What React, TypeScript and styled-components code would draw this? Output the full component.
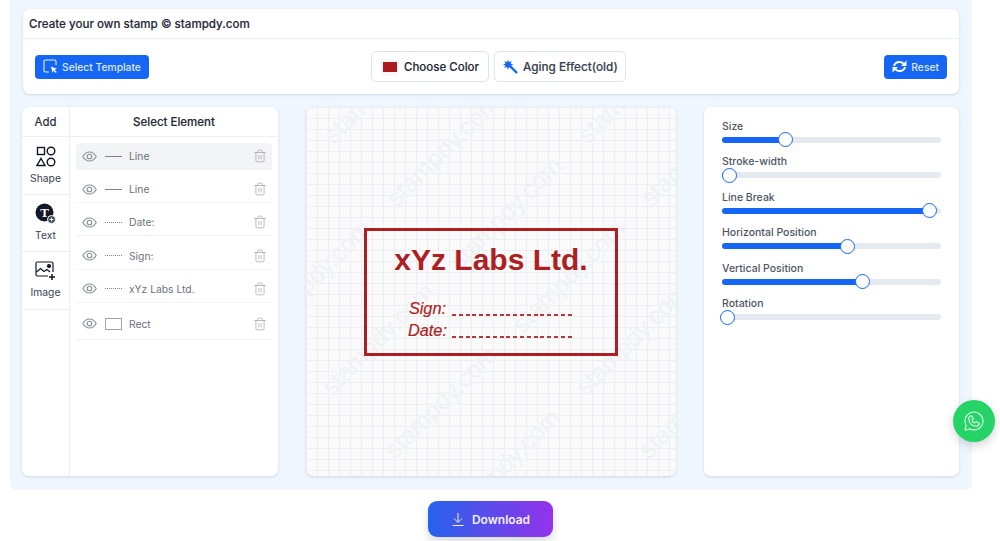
import React from "react";
import styled, { createGlobalStyle } from "styled-components";
import { Trash2 } from "lucide-react";
import { PiWhatsappLogoLight } from "react-icons/pi";

const Global = createGlobalStyle`
  html, body { margin: 0; padding: 0; background: #fff; }
  body { font-family: Inter, "Noto Sans", sans-serif; overflow: hidden; }
  * { box-sizing: border-box; }
`;

const Page = styled.div`
  width: 1000px;
  height: 541px;
  display: flex;
  flex-direction: column;
`;
const Panel = styled.main`
  width: 962px;
  height: 489px;
  margin-left: 10px;
  padding: 9px 13px 13px 12px;
  background: #eff6ff;
  border-radius: 0 0 7px 7px;
  display: flex;
  flex-direction: column;
  gap: 13px;
  box-shadow: 0 1px 1px rgba(30, 64, 120, 0.06);
`;
const HeaderCard = styled.section`
  height: 85px;
  margin-left: 1px;
  background: #fff;
  border-radius: 7px;
  box-shadow: 0 1px 3px rgba(15, 23, 42, 0.14);
  display: flex;
  flex-direction: column;
`;
const Title = styled.h1`
  margin: 0;
  height: 30px;
  padding-left: 6px;
  display: flex;
  align-items: center;
  font-size: 11.6px;
  font-weight: 500;
  color: #1f2937;
  -webkit-text-stroke: 0.15px #1f2937;
  border-bottom: 1px solid #eceef2;
`;
const Controls = styled.div`
  flex: 1;
  padding: 0 12px;
  display: grid;
  grid-template-columns: 336px 254px 1fr;
  align-items: center;
`;
const PrimaryButton = styled.button<{ $end?: boolean }>`
  height: 24px;
  padding: 0 8px;
  justify-self: ${(p) => (p.$end ? "end" : "start")};
  display: inline-flex;
  align-items: center;
  gap: 4px;
  border: 0;
  border-radius: 4px;
  background: #1566f5;
  color: #dfe9ff;
  font: 500 10.3px Inter, sans-serif;
`;
const CenterGroup = styled.div`
  display: flex;
  gap: 5px;
`;
const OutlineButton = styled.button<{ $muted?: boolean }>`
  height: 31px;
  padding: 0 ${(p) => (p.$muted ? 7 : 9)}px 0 8px;
  display: inline-flex;
  align-items: center;
  gap: 5px;
  background: #fff;
  border: 1px solid #dfe3ea;
  border-radius: 5px;
  color: ${(p) => (p.$muted ? "#374151" : "#1f2937")};
  font: 500 ${(p) => (p.$muted ? 11.75 : 11.5)}px Inter, sans-serif;
  -webkit-text-stroke: 0.15px ${(p) => (p.$muted ? "#374151" : "#1f2937")};
  white-space: nowrap;
`;
const Swatch = styled.span`
  width: 18px;
  height: 18px;
  margin-left: 1px;
  display: flex;
  align-items: center;
  justify-content: center;
  border-radius: 3px;
  background: #f8f8f8;
  &::after {
    content: "";
    width: 14px;
    height: 10px;
    background: #ad1a1e;
  }
`;
const Workspace = styled.div`
  flex: 1;
  display: grid;
  grid-template-columns: 256px 370px 255px;
  justify-content: space-between;
  min-height: 0;
`;
const Card = styled.section`
  background: #fff;
  border-radius: 7px;
  box-shadow: 0 1px 3px rgba(15, 23, 42, 0.14);
  overflow: hidden;
`;
const ElementsCard = styled(Card)`
  display: grid;
  grid-template-columns: 48px 1fr;
`;
const AddColumn = styled.div`
  border-right: 1px solid #eceef2;
  display: flex;
  flex-direction: column;
`;
const ColumnHead = styled.div`
  height: 30px;
  display: flex;
  align-items: center;
  justify-content: center;
  border-bottom: 1px solid #eceef2;
  font-size: 11.5px;
  font-weight: 400;
  color: #1f2937;
  -webkit-text-stroke: 0.15px #1f2937;
`;
const ElementsHead = styled(ColumnHead)`
  font-weight: 500;
`;
const AddTab = styled.button`
  height: 57.5px;
  padding: 0 0 1px;
  background: none;
  border: 0;
  border-bottom: 1px solid #eceef2;
  display: flex;
  flex-direction: column;
  align-items: center;
  justify-content: center;
  gap: 5px;
  color: #374151;
  font: 400 10.3px Inter, sans-serif;
`;
const ElementList = styled.ul`
  list-style: none;
  margin: 6px 0 0;
  padding: 0 6px;
`;
const ElementRow = styled.li<{ $active?: boolean; $tall?: boolean }>`
  height: ${(p) => (p.$tall ? 31 : 27)}px;
  margin-bottom: 6.2px;
  padding: 0 5px 0 6px;
  display: flex;
  align-items: center;
  border-bottom: 1px solid #f0f2f5;
  border-radius: ${(p) => (p.$active ? "5px 5px 0 0" : 0)};
  color: #6b7280;
  font-size: 10.3px;
  font-weight: 400;
  background: ${(p) => (p.$active ? "#f3f4f6" : "#fff")};
`;
const RowGlyph = styled.span`
  width: 24px;
  margin-left: 8px;
  display: flex;
  align-items: center;
`;
const RowLabel = styled.span`
  flex: 1;
`;
const SolidDash = styled.span`
  width: 17px;
  border-top: 1px solid #7b828c;
`;
const DotDash = styled.span`
  width: 17px;
  border-top: 1px dotted #7b828c;
`;
const RectGlyph = styled.span`
  width: 17px;
  height: 12px;
  border: 1px solid #9ca3af;
`;
const CanvasCard = styled(Card)`
  position: relative;
  background-color: #fafafb;
  background-image:
    linear-gradient(#eceef2 1px, transparent 1px),
    linear-gradient(90deg, #eceef2 1px, transparent 1px);
  background-size: 11px 11px;
  display: flex;
  align-items: center;
  justify-content: center;
`;
const Watermarks = styled.svg`
  position: absolute;
  inset: 0;
  width: 100%;
  height: 100%;
  font-family: "Liberation Sans", sans-serif;
  font-size: 25px;
  fill: #f0f1f4;
`;
const Stamp = styled.div`
  position: relative;
  width: 254px;
  height: 128px;
  border: 3px solid #ad1f23;
  color: #ad1f23;
  font-family: "Liberation Sans", Arial, sans-serif;
  display: flex;
  flex-direction: column;
  align-items: center;
`;
const StampName = styled.div`
  margin-top: 11px;
  font-size: 30px;
  line-height: 35px;
  font-weight: 700;
`;
const StampLines = styled.div`
  margin-top: 21px;
  align-self: flex-start;
  margin-left: 41px;
  display: grid;
  grid-template-columns: 38px 122px;
  column-gap: 6px;
  row-gap: 2px;
`;
const SignLabel = styled.span`
  font-size: 16.3px;
  line-height: 20px;
  font-style: italic;
  text-align: right;
  -webkit-text-stroke: 0.2px #ad1f23;
`;
const DashedLine = styled.span`
  height: 2px;
  margin-top: 16px;
  background: repeating-linear-gradient(90deg, #b5383c 0 4px, transparent 4px 6.8px);
`;
const SlidersCard = styled(Card)`
  padding: 12.5px 18px 0;
  display: flex;
  flex-direction: column;
  height: 369px;
`;
const SliderBlock = styled.div`
  height: 35.5px;
  display: flex;
  flex-direction: column;
  gap: 3px;
`;
const SliderLabel = styled.label`
  height: 14px;
  line-height: 14px;
  font-size: 10.5px;
  font-weight: 500;
  color: #4b5563;
`;
const Track = styled.div`
  position: relative;
  height: 6px;
  border-radius: 3px;
  background: #e5e9f0;
`;
const Fill = styled.div`
  height: 100%;
  border-radius: 3px;
  background: #1566f5;
`;
const Thumb = styled.span`
  position: absolute;
  top: -4.5px;
  width: 15px;
  height: 15px;
  margin-left: -7.5px;
  border-radius: 50%;
  background: #fff;
  border: 1.5px solid #1566f5;
`;
const Footer = styled.div`
  flex: 1;
  display: flex;
  justify-content: center;
  padding-top: 12px;
  padding-right: 19px;
`;
const DownloadButton = styled.button`
  width: 125px;
  height: 36px;
  border: 0;
  border-radius: 9px;
  background: linear-gradient(90deg, #2563eb, #9333ea);
  box-shadow: 0 4px 8px rgba(30, 41, 59, 0.18);
  color: #f3f1ff;
  font: 600 12px Inter, sans-serif;
  display: flex;
  align-items: center;
  justify-content: center;
  gap: 7px;
`;
const WhatsappFab = styled.a`
  position: fixed;
  left: 953px;
  top: 400px;
  width: 42px;
  height: 42px;
  border-radius: 50%;
  background: #25d366;
  color: #d9fbe5;
  display: flex;
  align-items: center;
  justify-content: center;
  box-shadow: 0 4px 10px rgba(15, 23, 42, 0.18);
`;

const TemplateIcon = () => (
  <svg width="15" height="15" viewBox="0 0 15 15" fill="none">
    <path d="M6 13H2.500A1.500 1.500 0 0 1 1 11.500V2.500A1.500 1.500 0 0 1 2.500 1h9A1.500 1.500 0 0 1 13 2.500V6" stroke="#eaf1ff" strokeWidth="1.100" />
    <path d="M8 7.500l6 2.200-2.400 1 2.100 2.300-1 .9-2.100-2.300-1 2.400z" fill="#fff" />
  </svg>
);
const WandIcon = () => (
  <svg width="15" height="15" viewBox="0 0 15 15" fill="#1566f5">
    <path d="M5 0.500l1 2.800 2.700-1.200-1 2.700 2.800 1-2.800 1 .8 2.700-2.600-1.300-1 2.600-.9-2.700-2.800 1 1.200-2.700L0 5.500l2.500-1-1.100-2.600 2.600 1.300z" />
    <path d="M6.500 6.500l7.500 7.500" stroke="#1566f5" strokeWidth="2.400" />
  </svg>
);
const ResetIcon = () => (
  <svg width="15" height="13" viewBox="0 0 15 13" fill="none">
    <path d="M2 6C2.600 3.400 5 2 7.500 2c1.700 0 2.900.5 4 1.500" stroke="#fff" strokeWidth="2" />
    <path d="M14.500 0.500v5.500H9z" fill="#fff" />
    <path d="M13 7c-.6 2.600-3 4-5.500 4-1.700 0-2.900-.5-4-1.500" stroke="#fff" strokeWidth="2" />
    <path d="M0.500 12.500V7H6z" fill="#fff" />
  </svg>
);
const EyeIcon = () => (
  <svg width="15" height="11" viewBox="0 0 15 11" fill="none" stroke="#8b9098" strokeWidth="1.100">
    <path d="M0.800 5.500C2.500 2.500 4.800 1 7.500 1s5 1.500 6.700 4.500C12.500 8.500 10.200 10 7.500 10S2.500 8.500.8 5.500z" />
    <circle cx="7.500" cy="5.500" r="2.300" />
  </svg>
);
const ShapeIcon = () => (
  <svg width="20" height="21" viewBox="0 0 20 21" fill="none" stroke="#111827" strokeWidth="1.400">
    <rect x="1.500" y="1.500" width="7" height="7" />
    <circle cx="15" cy="5" r="3.800" />
    <path d="M5 12.500l4 7H1z" />
    <circle cx="15" cy="16" r="3.800" />
  </svg>
);
const TextIcon = () => (
  <svg width="21" height="21" viewBox="0 0 21 21">
    <circle cx="9.500" cy="9.500" r="9" fill="#111827" />
    <text x="9.500" y="14" textAnchor="middle" fontFamily="'Liberation Serif', serif" fontWeight="700" fontSize="13" fill="#fff">T</text>
    <circle cx="16.500" cy="16.500" r="4" fill="#374151" stroke="#fff" strokeWidth="1" />
    <path d="M14.500 16.500h4M16.500 14.500v4" stroke="#fff" strokeWidth="1" />
  </svg>
);
const ImageIcon = () => (
  <svg width="21" height="20" viewBox="0 0 21 20" fill="none" stroke="#111827" strokeWidth="1.200">
    <path d="M13 15H2.500A1.500 1.500 0 0 1 1 13.500V2.500A1.500 1.500 0 0 1 2.500 1h14A1.500 1.500 0 0 1 18 2.500V11" />
    <path d="M1.500 11l4-3.500 3.500 3 3-2 3 2.500" />
    <circle cx="14" cy="5" r="1.500" fill="#111827" />
    <path d="M17 13v6M14 16h6" strokeWidth="1.500" />
  </svg>
);
const DownloadIcon = () => (
  <svg width="14" height="15" viewBox="0 0 14 15" fill="none" stroke="#f3f1ff" strokeWidth="1">
    <path d="M7 1v9M3 6.500L7 10.500l4-4M1.500 13.500h11" />
  </svg>
);

const elements = [
  { label: "Line", glyph: <SolidDash /> },
  { label: "Line", glyph: <SolidDash /> },
  { label: "Date:", glyph: <DotDash /> },
  { label: "Sign:", glyph: <DotDash /> },
  { label: "xYz Labs Ltd.", glyph: <DotDash /> },
  { label: "Rect", glyph: <RectGlyph /> },
];
const sliders = [
  { label: "Size", at: 28.8 },
  { label: "Stroke-width", at: 3.4 },
  { label: "Line Break", at: 94.8 },
  { label: "Horizontal Position", at: 57.5 },
  { label: "Vertical Position", at: 64.2 },
  { label: "Rotation", at: 2.5 },
];
const marks: { x: number; y: number }[] = [];
for (let j = -3; j < 8; j++) {
  for (let i = -3; i < 3; i++) {
    const x = 91 + 254 * i + 63 * j;
    const y = 101 + 63 * j;
    if (x > -160 && x < 380 && y > -10 && y < 480) marks.push({ x, y });
  }
}

export default function App() {
  return (
    <Page>
      <Global />
      <Panel>
        <HeaderCard>
          <Title>Create your own stamp © stampdy.com</Title>
          <Controls>
            <PrimaryButton>
              <TemplateIcon />
              Select Template
            </PrimaryButton>
            <CenterGroup>
              <OutlineButton>
                <Swatch />
                Choose Color
              </OutlineButton>
              <OutlineButton $muted>
                <WandIcon />
                Aging Effect(old)
              </OutlineButton>
            </CenterGroup>
            <PrimaryButton $end>
              <ResetIcon />
              Reset
            </PrimaryButton>
          </Controls>
        </HeaderCard>
        <Workspace>
          <ElementsCard>
            <AddColumn>
              <ColumnHead>Add</ColumnHead>
              <AddTab>
                <ShapeIcon />
                Shape
              </AddTab>
              <AddTab>
                <TextIcon />
                Text
              </AddTab>
              <AddTab>
                <ImageIcon />
                Image
              </AddTab>
            </AddColumn>
            <div>
              <ElementsHead>Select Element</ElementsHead>
              <ElementList>
                {elements.map((el, i) => (
                  <ElementRow key={i} $active={i === 0} $tall={i === 5}>
                    <EyeIcon />
                    <RowGlyph>{el.glyph}</RowGlyph>
                    <RowLabel>{el.label}</RowLabel>
                    <Trash2 size={14} color="#a3a7ae" strokeWidth={1.300} />
                  </ElementRow>
                ))}
              </ElementList>
            </div>
          </ElementsCard>
          <CanvasCard>
            <Watermarks>
              {marks.map((m) => (
                <text key={`${m.x}-${m.y}`} x={m.x} y={m.y} transform={`rotate(-45 ${m.x} ${m.y})`}>
                  stampdy.com
                </text>
              ))}
            </Watermarks>
            <Stamp>
              <StampName>xYz Labs Ltd.</StampName>
              <StampLines>
                <SignLabel>Sign:</SignLabel>
                <DashedLine />
                <SignLabel>Date:</SignLabel>
                <DashedLine />
              </StampLines>
            </Stamp>
          </CanvasCard>
          <SlidersCard>
            {sliders.map((s) => (
              <SliderBlock key={s.label}>
                <SliderLabel>{s.label}</SliderLabel>
                <Track>
                  <Fill style={{ width: `${s.at}%` }} />
                  <Thumb style={{ left: `${s.at}%` }} />
                </Track>
              </SliderBlock>
            ))}
          </SlidersCard>
        </Workspace>
      </Panel>
      <Footer>
        <DownloadButton>
          <DownloadIcon />
          Download
        </DownloadButton>
      </Footer>
      <WhatsappFab>
        <PiWhatsappLogoLight size={24} />
      </WhatsappFab>
    </Page>
  );
}
